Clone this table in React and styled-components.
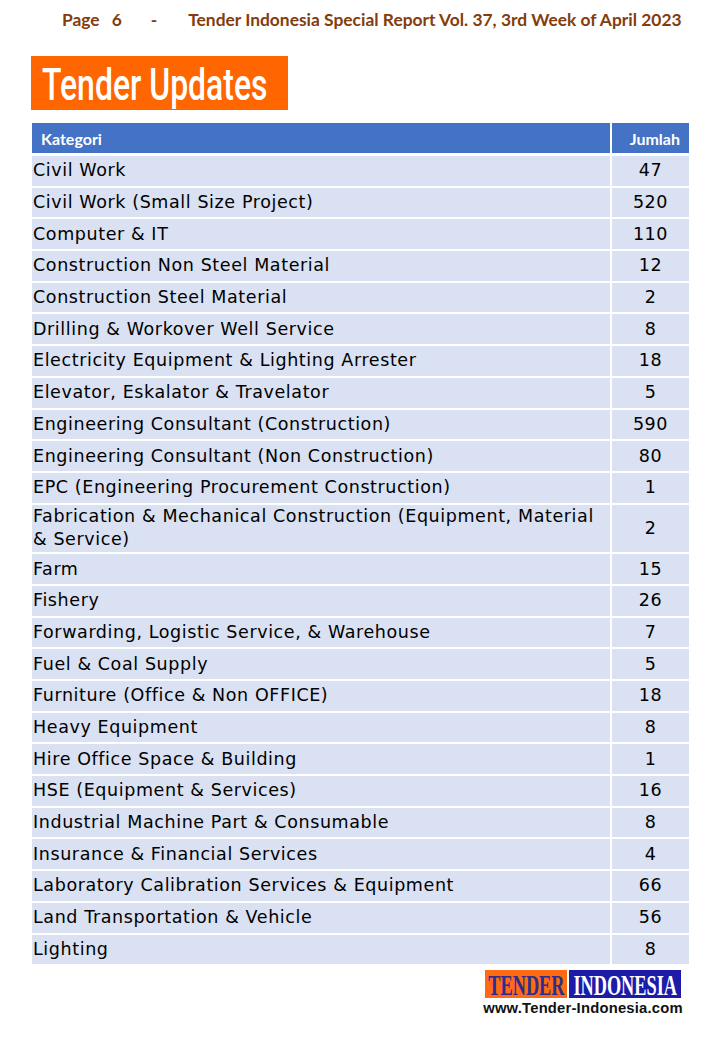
import React from "react";
import styled, { createGlobalStyle } from "styled-components";

const Global = createGlobalStyle`
  html, body { margin: 0; padding: 0; background: #fff; }
  body { width: 720px; height: 1040px; overflow: hidden; }
`;

const Page = styled.div`
  width: 720px;
  height: 1040px;
  box-sizing: border-box;
  padding: 9px 32px 0 31px;
  display: flex;
  flex-direction: column;
`;

const RunningHead = styled.div`
  display: flex;
  align-items: baseline;
  height: 22px;
  font-family: "Lato", "Liberation Sans", sans-serif;
  font-weight: 700;
  font-size: 17.4px;
  color: #843c0c;
  white-space: nowrap;
`;

const HeadPart = styled.span`
  margin-left: ${(p) => p.$gap}px;
`;

const TitleBox = styled.div`
  margin-top: 25px;
  width: 257px;
  height: 54px;
  background: #ff6600;
  display: flex;
  align-items: center;
  padding-left: 11px;
  box-sizing: border-box;
  overflow: hidden;
`;

const TitleText = styled.span`
  display: inline-block;
  font-family: "Roboto", "Liberation Sans", sans-serif;
  font-weight: 500;
  font-size: 45px;
  line-height: 1;
  color: #fff;
  transform: scaleX(0.71);
  transform-origin: left center;
  white-space: nowrap;
  margin-top: 2px;
`;

const Table = styled.div`
  margin-top: 13px;
  margin-left: 1px;
  width: 657px;
  display: grid;
  grid-template-columns: 578px 1fr;
  column-gap: 2px;
  row-gap: 2px;
`;

const HeadCell = styled.div`
  background: #4472c4;
  height: 30px;
  display: flex;
  align-items: center;
  justify-content: ${(p) => (p.$num ? "flex-end" : "flex-start")};
  padding: ${(p) => (p.$num ? "0 9px 0 0" : "0 0 0 9px")};
  margin-bottom: 1px;
  font-family: "Lato", "Liberation Sans", sans-serif;
  font-weight: 700;
  font-size: 16px;
  color: #fff;
`;

const Cell = styled.div`
  background: #d9e1f2;
  min-height: ${(p) => (p.$tall ? 47.7 : 29.7)}px;
  display: flex;
  align-items: center;
  justify-content: ${(p) => (p.$num ? "center" : "flex-start")};
  padding: ${(p) => (p.$num ? "0" : "0 12px 0 1px")};
  font-family: "DejaVu Sans", "Liberation Sans", sans-serif;
  font-size: 17.5px;
  letter-spacing: 0.6px;
  line-height: 23px;
  color: #000;
`;

const Footer = styled.div`
  margin-top: 6px;
  align-self: flex-end;
  margin-right: 3px;
  display: flex;
  flex-direction: column;
  align-items: center;
  width: 204px;
`;

const Logo = styled.div`
  display: flex;
  gap: 2px;
  height: 28px;
`;

const LogoPart = styled.div`
  background: ${(p) => p.$bg};
  color: ${(p) => p.$fg};
  width: ${(p) => p.$w}px;
  height: 28px;
  display: flex;
  align-items: center;
  justify-content: center;
`;

const LogoWord = styled.span`
  display: inline-block;
  font-family: "Liberation Serif", serif;
  font-weight: 700;
  font-size: 29px;
  line-height: 1;
  transform: scaleX(0.63);
  white-space: nowrap;
  margin: 3px -40px 0;
`;

const Url = styled.div`
  margin-top: 2px;
  font-family: "Liberation Sans", Arial, sans-serif;
  font-weight: 700;
  font-size: 14.8px;
  color: #111;
  letter-spacing: 0.2px;
  white-space: nowrap;
`;

const rows = [
  ["Civil Work", "47"],
  ["Civil Work (Small Size Project)", "520"],
  ["Computer & IT", "110"],
  ["Construction Non Steel Material", "12"],
  ["Construction Steel Material", "2"],
  ["Drilling & Workover Well Service", "8"],
  ["Electricity Equipment & Lighting Arrester", "18"],
  ["Elevator, Eskalator & Travelator", "5"],
  ["Engineering Consultant (Construction)", "590"],
  ["Engineering Consultant (Non Construction)", "80"],
  ["EPC (Engineering Procurement Construction)", "1"],
  ["Fabrication & Mechanical Construction (Equipment, Material & Service)", "2", true],
  ["Farm", "15"],
  ["Fishery", "26"],
  ["Forwarding, Logistic Service, & Warehouse", "7"],
  ["Fuel & Coal Supply", "5"],
  ["Furniture (Office & Non OFFICE)", "18"],
  ["Heavy Equipment", "8"],
  ["Hire Office Space & Building", "1"],
  ["HSE (Equipment & Services)", "16"],
  ["Industrial Machine Part & Consumable", "8"],
  ["Insurance & Financial Services", "4"],
  ["Laboratory Calibration Services & Equipment", "66"],
  ["Land Transportation & Vehicle", "56"],
  ["Lighting", "8"],
];

export default function App() {
  return (
    <>
      <Global />
      <Page>
        <RunningHead>
          <HeadPart $gap={31}>Page</HeadPart>
          <HeadPart $gap={12}>6</HeadPart>
          <HeadPart $gap={29}>-</HeadPart>
          <HeadPart $gap={31}>Tender Indonesia Special Report Vol. 37, 3rd Week of April 2023</HeadPart>
        </RunningHead>
        <TitleBox>
          <TitleText>Tender Updates</TitleText>
        </TitleBox>
        <Table>
          <HeadCell>Kategori</HeadCell>
          <HeadCell $num>Jumlah</HeadCell>
          {rows.map(([name, n, tall]) => (
            <React.Fragment key={name}>
              <Cell $tall={tall}>{name}</Cell>
              <Cell $num $tall={tall}>{n}</Cell>
            </React.Fragment>
          ))}
        </Table>
        <Footer>
          <Logo>
            <LogoPart $bg="#ff6a13" $fg="#2b2e8c" $w={82}>
              <LogoWord>TENDER</LogoWord>
            </LogoPart>
            <LogoPart $bg="#1c1ca8" $fg="#fff" $w={112}>
              <LogoWord>INDONESIA</LogoWord>
            </LogoPart>
          </Logo>
          <Url>www.Tender-Indonesia.com</Url>
        </Footer>
      </Page>
    </>
  );
}
